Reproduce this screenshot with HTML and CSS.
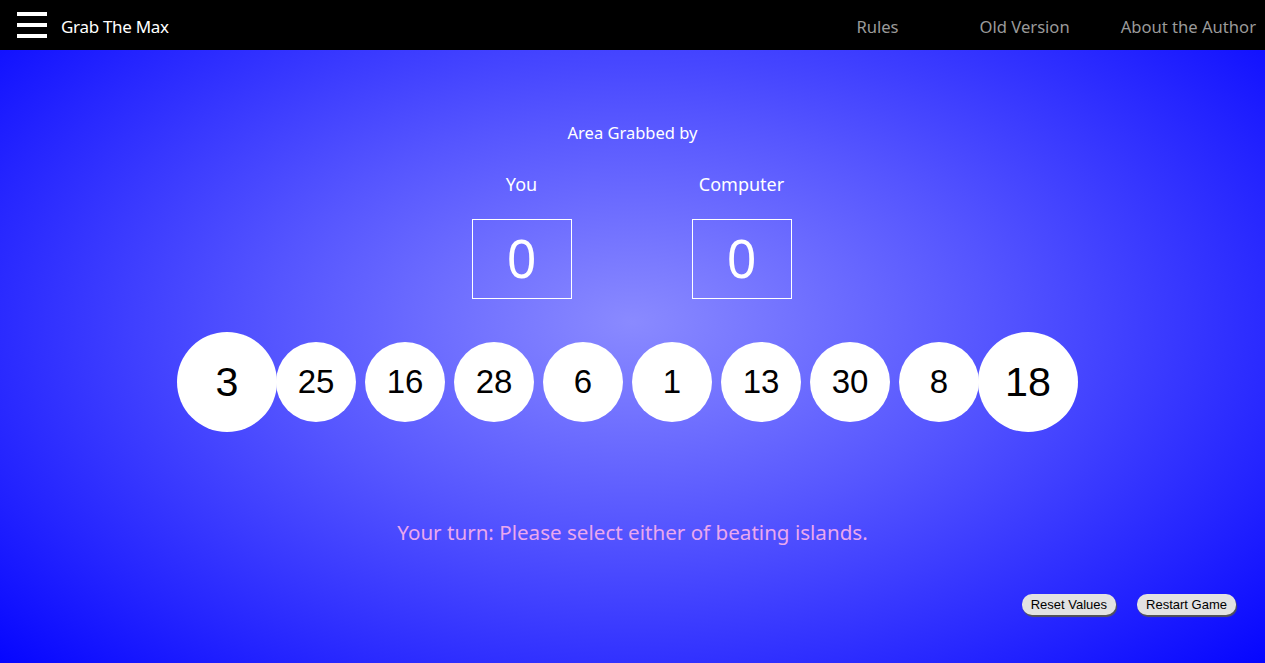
FILE: index.html
```html
<!DOCTYPE html>
<html lang="en">
<head>
<meta charset="utf-8">
<title>Grab The Max</title>
<link rel="stylesheet" href="styles.css">
</head>
<body>
<nav class="navbar">
  <div class="brand">
    <span class="burger"><span></span><span></span><span></span></span>
    <span class="brand-name">Grab The Max</span>
  </div>
  <ul class="links">
    <li class="link-rules">Rules</li>
    <li class="link-old">Old Version</li>
    <li class="link-about">About the Author</li>
  </ul>
</nav>
<main class="game">
  <div class="area-title">Area Grabbed by</div>
  <div class="scores">
    <div class="score">
      <div class="score-label">You</div>
      <div class="score-box">0</div>
    </div>
    <div class="score">
      <div class="score-label">Computer</div>
      <div class="score-box">0</div>
    </div>
  </div>
  <div class="islands">
    <div class="island beat">3</div>
    <div class="island">25</div>
    <div class="island">16</div>
    <div class="island">28</div>
    <div class="island">6</div>
    <div class="island">1</div>
    <div class="island">13</div>
    <div class="island">30</div>
    <div class="island">8</div>
    <div class="island beat">18</div>
  </div>
  <div class="message">Your turn: Please select either of beating islands.</div>
  <div class="controls">
    <button class="btn">Reset Values</button>
    <button class="btn">Restart Game</button>
  </div>
</main>
</body>
</html>
```
FILE: styles.css
```css
html, body {
  margin: 0;
  padding: 0;
  height: 100%;
}
body {
  font-family: "Noto Sans", "Open Sans", sans-serif;
  background: radial-gradient(ellipse 900px 520px at 632px 322px, #8a8aff 0%, #5555ff 40%, #2424ff 75%, #0000ff 100%);
  background-color: #0000ff;
  overflow: hidden;
  color: #fff;
}
.navbar {
  height: 50px;
  background: #000;
  display: flex;
  align-items: center;
  justify-content: space-between;
}
.brand {
  display: flex;
  align-items: center;
  padding-left: 17px;
}
.burger {
  display: flex;
  flex-direction: column;
  justify-content: space-between;
  width: 30px;
  height: 26px;
  margin-right: 14px;
}
.burger span {
  display: block;
  height: 4px;
  background: #fff;
}
.brand-name {
  font-size: 17px;
  color: #fff;
  letter-spacing: -0.3px;
  padding-top: 2px;
}
.links {
  list-style: none;
  margin: 0;
  padding: 2px 0 0 0;
  display: flex;
  align-items: center;
  font-size: 16.6px;
  color: #9a9a9a;
}
.link-rules { margin-right: 81px; }
.link-old { margin-right: 51px; }
.link-about { margin-right: 9px; }
.game {
  display: flex;
  flex-direction: column;
  align-items: center;
}
.area-title {
  margin-top: 72px;
  font-size: 16.5px;
  line-height: 22px;
}
.scores {
  display: flex;
  gap: 120px;
  margin-top: 28px;
  margin-right: 2px;
}
.score {
  display: flex;
  flex-direction: column;
  align-items: center;
}
.score-label {
  font-size: 18px;
  line-height: 24px;
}
.score-box {
  margin-top: 23px;
  width: 98px;
  height: 78px;
  border: 1px solid #fff;
  display: flex;
  align-items: center;
  justify-content: center;
  font-size: 52px;
  line-height: 1;
  font-weight: 400;
  padding-bottom: 2px;
  box-sizing: content-box;
  height: 76px;
}
.islands {
  display: flex;
  margin-top: 43px;
  margin-right: 10px;
}
.island {
  width: 80px;
  height: 80px;
  margin: 0 4.5px;
  border-radius: 50%;
  background: #fff;
  color: #000;
  font-family: "Liberation Sans", Arial, sans-serif;
  font-size: 33px;
  display: flex;
  align-items: center;
  justify-content: center;
}
.island.beat {
  transform: scale(1.25);
}
.message {
  margin-top: 96px;
  font-size: 20.6px;
  color: #eaa8ee;
}
.controls {
  align-self: flex-end;
  display: flex;
  gap: 21px;
  margin-top: 48px;
  margin-right: 29px;
}
.btn {
  font-family: "Liberation Sans", Arial, sans-serif;
  font-size: 13px;
  color: #000;
  background: #e2e2e2;
  border: none;
  border-radius: 10px;
  padding: 3px 9px;
  box-shadow: 1px 2px 1px #555;
}
```
